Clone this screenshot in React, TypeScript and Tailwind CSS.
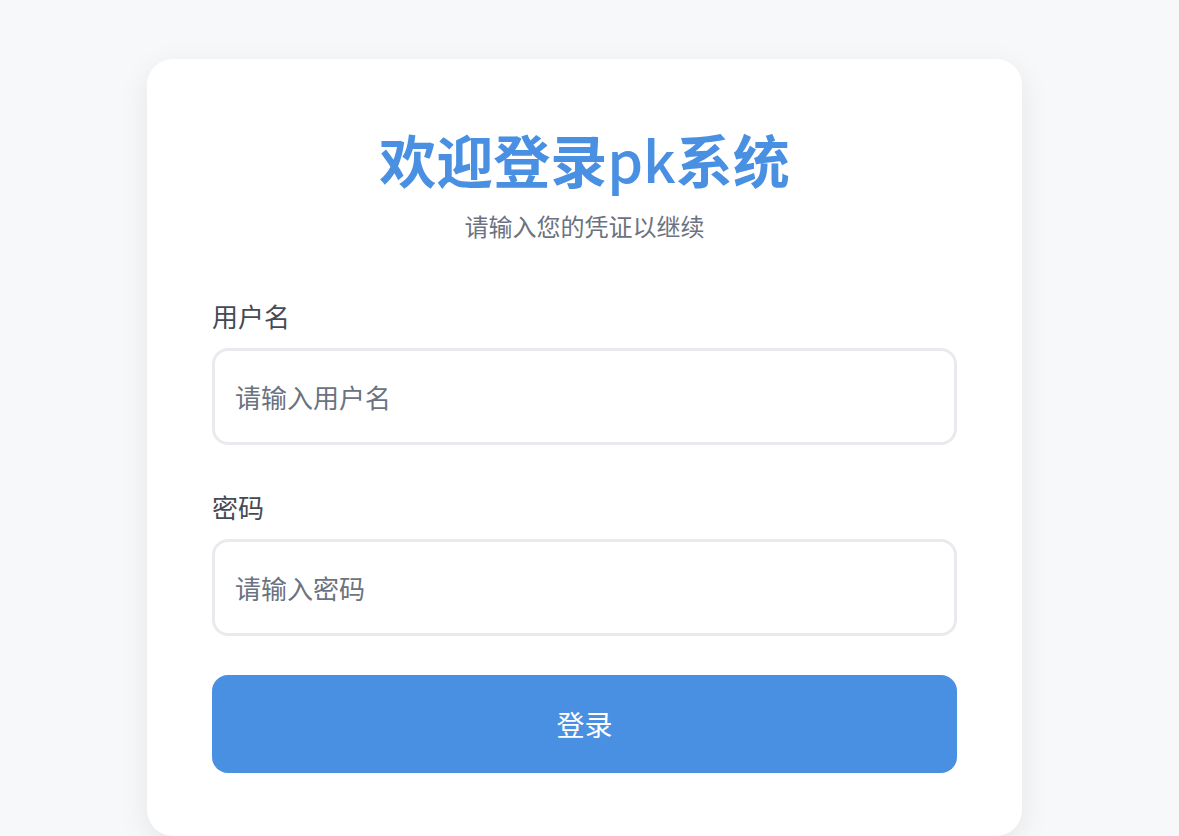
import React from "react";

export default function App() {
  const font = { fontFamily: '"Noto Sans CJK SC", "Noto Sans", sans-serif' };
  return (
    <div
      className="min-h-screen w-full bg-[#f7f8fa] flex justify-center items-start pt-[59px] pr-[10px]"
      style={font}
    >
      <div className="w-[875px] bg-white rounded-[26px] shadow-[0_8px_30px_rgba(0,0,0,0.08)] px-[65px] pt-[68px] pb-[63px] flex flex-col">
        <h1 className="text-[57px] leading-[62px] font-bold text-[#4a90e2] text-center">
          欢迎登录<span className="font-medium">pk</span>系统
        </h1>
        <p className="mt-[21px] text-[24px] leading-[32px] text-[#6b7280] text-center">
          请输入您的凭证以继续
        </p>
        <label className="mt-[56px] text-[26px] leading-[36px] text-[#454a55]">用户名</label>
        <input
          type="text"
          placeholder="请输入用户名"
          className="mt-[14px] h-[97px] w-full rounded-[16px] border-[3px] border-[#e8eaed] px-[20px] text-[26px] text-[#333] placeholder:text-[#6b7280] outline-none bg-white"
        />
        <label className="mt-[44px] text-[26px] leading-[36px] text-[#454a55]">密码</label>
        <input
          type="password"
          placeholder="请输入密码"
          className="mt-[14px] h-[97px] w-full rounded-[16px] border-[3px] border-[#e8eaed] px-[20px] text-[26px] text-[#333] placeholder:text-[#6b7280] outline-none bg-white"
        />
        <button className="mt-[39px] h-[98px] w-full rounded-[16px] bg-[#4a90e2] text-white text-[28px]">
          登录
        </button>
      </div>
    </div>
  );
}
